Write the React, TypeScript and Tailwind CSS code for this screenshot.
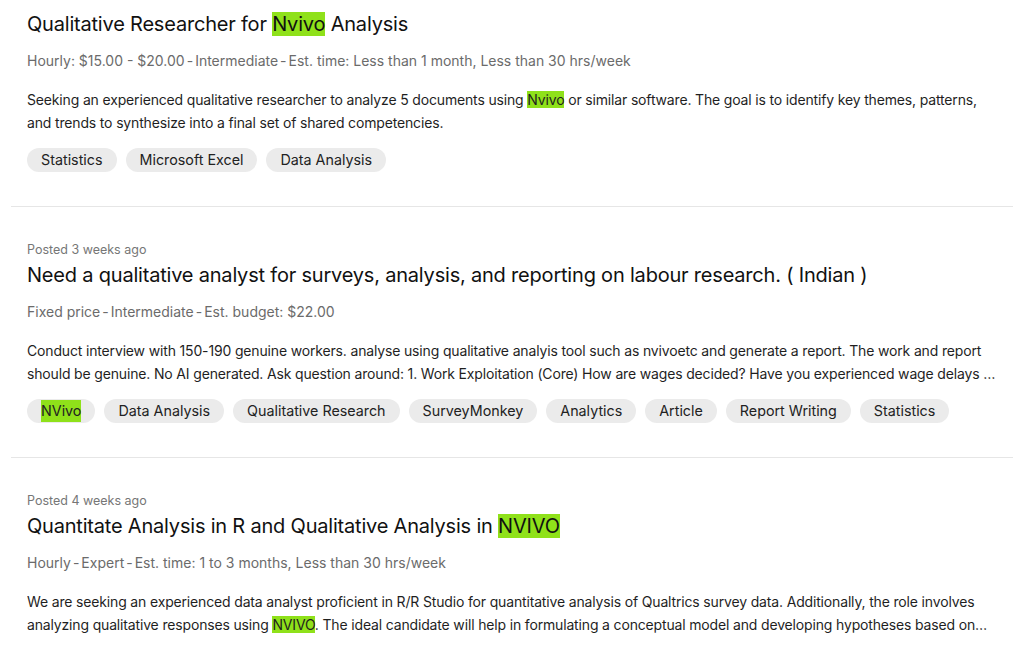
import React from "react";

type Part = string | { hl: string };

type Job = {
  posted?: string;
  title: Part[];
  meta: string[];
  desc: Part[];
  tags: { label: string; hl?: boolean }[];
};

const JOBS: Job[] = [
  {
    title: ["Qualitative Researcher for ", { hl: "Nvivo" }, " Analysis"],
    meta: ["Hourly: $15.00 - $20.00", "Intermediate", "Est. time: Less than 1 month, Less than 30 hrs/week"],
    desc: [
      "Seeking an experienced qualitative researcher to analyze 5 documents using ",
      { hl: "Nvivo" },
      " or similar software. The goal is to identify key themes, patterns, and trends to synthesize into a final set of shared competencies.",
    ],
    tags: [{ label: "Statistics" }, { label: "Microsoft Excel" }, { label: "Data Analysis" }],
  },
  {
    posted: "Posted 3 weeks ago",
    title: ["Need a qualitative analyst for surveys, analysis, and reporting on labour research. ( Indian )"],
    meta: ["Fixed price", "Intermediate", "Est. budget: $22.00"],
    desc: [
      "Conduct interview with 150-190 genuine workers. analyse using qualitative analyis tool such as nvivoetc and generate a report. The work and report should be genuine. No AI generated. Ask question around: 1. Work Exploitation (Core) How are wages decided? Have you experienced wage delays or deductions? Are you paid for overtime?",
    ],
    tags: [
      { label: "NVivo", hl: true },
      { label: "Data Analysis" },
      { label: "Qualitative Research" },
      { label: "SurveyMonkey" },
      { label: "Analytics" },
      { label: "Article" },
      { label: "Report Writing" },
      { label: "Statistics" },
    ],
  },
  {
    posted: "Posted 4 weeks ago",
    title: ["Quantitate Analysis in R and Qualitative Analysis in ", { hl: "NVIVO" }],
    meta: ["Hourly", "Expert", "Est. time: 1 to 3 months, Less than 30 hrs/week"],
    desc: [
      "We are seeking an experienced data analyst proficient in R/R Studio for quantitative analysis of Qualtrics survey data. Additionally, the role involves analyzing qualitative responses using ",
      { hl: "NVIVO" },
      ". The ideal candidate will help in formulating a conceptual model and developing hypotheses based on the findings of the analysis.",
    ],
    tags: [],
  },
];

function Rich({ parts }: { parts: Part[] }) {
  return (
    <>
      {parts.map((p, i) =>
        typeof p === "string" ? (
          <React.Fragment key={i}>{p}</React.Fragment>
        ) : (
          <span key={i} className="bg-[#8fe11a]">
            {p.hl}
          </span>
        )
      )}
    </>
  );
}

function JobCard({ job, first }: { job: Job; first: boolean }) {
  return (
    <section className={`px-4 ${first ? "pt-[10px]" : "border-t border-[#e6e6e6] pt-[34px]"} pb-[34px]`}>
      {job.posted && <div className="text-[12.5px] leading-[18px] text-[#767676]">{job.posted}</div>}
      <h2 className={`${job.posted ? "mt-[2px]" : ""} text-[20px] leading-[28px] tracking-[-0.2px] text-[#111]`}>
        <Rich parts={job.title} />
      </h2>
      <div className="mt-[13px] text-[14px] leading-[20px] text-[#6b6b6b]">
        {job.meta.map((m, i) => (
          <React.Fragment key={i}>
            {i > 0 && <span className="mx-[2px]">-</span>}
            {m}
          </React.Fragment>
        ))}
      </div>
      <p className="mt-[17px] line-clamp-2 text-[14px] leading-[23px] tracking-[-0.16px] text-[#1f1f1f]">
        <Rich parts={job.desc} />
      </p>
      {job.tags.length > 0 && (
        <div className="mt-[14px] flex flex-wrap gap-[9px]">
          {job.tags.map((t) => (
            <span
              key={t.label}
              className="flex h-[24px] items-center rounded-full bg-[#ebebeb] px-[14px] text-[14.3px] text-[#222]"
            >
              {t.hl ? <span className="bg-[#8fe11a]">{t.label}</span> : t.label}
            </span>
          ))}
        </div>
      )}
    </section>
  );
}

export default function App() {
  return (
    <div className="min-h-screen bg-white px-[11px]" style={{ fontFamily: "Inter, 'Noto Sans', sans-serif" }}>
      {JOBS.map((job, i) => (
        <JobCard key={i} job={job} first={i === 0} />
      ))}
    </div>
  );
}
